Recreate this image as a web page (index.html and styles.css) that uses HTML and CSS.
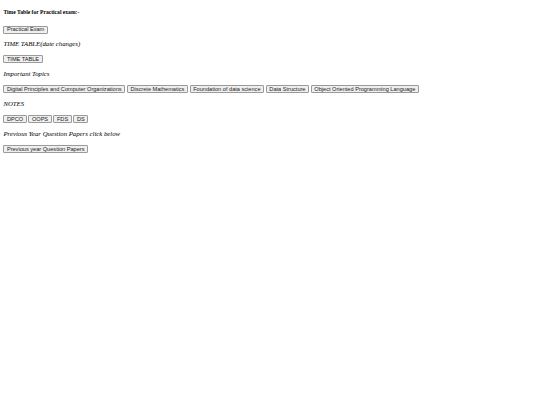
FILE: index.html
```html
<!DOCTYPE html>
<html>
<head>
<meta charset="utf-8">
<title>Time Table</title>
<link rel="stylesheet" href="styles.css">
</head>
<body class="doc">
<h5 class="title">Time Table for Practical exam:-</h5>
<div class="row"><button class="btn">Practical Exam</button></div>
<p class="label">TIME TABLE(date changes)</p>
<div class="row"><button class="btn">TIME TABLE</button></div>
<p class="label">Important Topics</p>
<div class="row">
<button class="btn">Digital Principles and Computer Organizations</button>
<button class="btn">Discrete Mathematics</button>
<button class="btn">Foundation of data science</button>
<button class="btn">Data Structure</button>
<button class="btn">Object Oriented Programming Language</button>
</div>
<p class="label">NOTES</p>
<div class="row">
<button class="btn">DPCO</button>
<button class="btn">OOPS</button>
<button class="btn">FDS</button>
<button class="btn">DS</button>
</div>
<p class="label">Previous Year Question Papers click below</p>
<div class="row"><button class="btn">Previous year Question Papers</button></div>
</body>
</html>
```
FILE: styles.css
```css
html {
  background: #ffffff;
}
.doc {
  margin: 0;
  padding: 9px 3.4px 0;
  font-family: "Liberation Serif", "Times New Roman", serif;
  color: #000000;
}
.title {
  font-size: 5.6px;
  line-height: 7px;
  font-weight: bold;
  margin: 0 0 9.5px;
}
.row {
  display: flex;
  gap: 1.8px;
  height: 8px;
}
.label {
  font-size: 6.75px;
  line-height: 7.6px;
  font-style: italic;
  margin: 6.4px 0 8px;
}
.btn {
  display: flex;
  align-items: center;
  height: 8px;
  box-sizing: border-box;
  font-family: "Liberation Sans", Arial, sans-serif;
  font-size: 5.625px;
  line-height: 1;
  color: #222222;
  background: #efefef;
  border: 1px solid #9a9a9a;
  border-radius: 1px;
  padding: 0 2.5px;
  white-space: nowrap;
}
```
